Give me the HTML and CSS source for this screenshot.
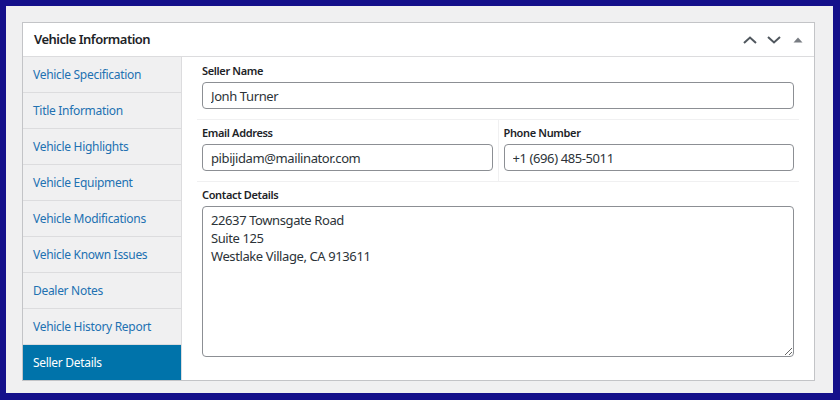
FILE: index.html
```html
<!DOCTYPE html>
<html lang="en">
<head>
<meta charset="utf-8">
<title>Vehicle Information</title>
<link rel="stylesheet" href="styles.css">
</head>
<body>
<div class="frame">
  <div class="postbox">
    <div class="postbox-header">
      <h2 class="postbox-title">Vehicle Information</h2>
      <div class="handle-actions">
        <button class="handle-btn" aria-label="Move up">
          <svg width="14" height="8" viewBox="0 0 14 8"><path d="M1 7 L7 1.5 L13 7" fill="none" stroke="#50575e" stroke-width="2"/></svg>
        </button>
        <button class="handle-btn" aria-label="Move down">
          <svg width="14" height="8" viewBox="0 0 14 8"><path d="M1 1 L7 6.5 L13 1" fill="none" stroke="#50575e" stroke-width="2"/></svg>
        </button>
        <button class="handle-btn toggle" aria-label="Toggle panel">
          <svg width="10" height="6" viewBox="0 0 10 6"><path d="M0.5 5.5 L5 0.5 L9.5 5.5 Z" fill="#787c82"/></svg>
        </button>
      </div>
    </div>
    <div class="postbox-body">
      <ul class="tabs">
        <li><a href="#">Vehicle Specification</a></li>
        <li><a href="#">Title Information</a></li>
        <li><a href="#">Vehicle Highlights</a></li>
        <li><a href="#">Vehicle Equipment</a></li>
        <li><a href="#">Vehicle Modifications</a></li>
        <li><a href="#">Vehicle Known Issues</a></li>
        <li><a href="#">Dealer Notes</a></li>
        <li><a href="#">Vehicle History Report</a></li>
        <li class="active"><a href="#">Seller Details</a></li>
      </ul>
      <div class="panel">
        <div class="row first">
          <div class="field">
            <label class="label" for="seller">Seller Name</label>
            <input class="input" id="seller" type="text" value="Jonh Turner">
          </div>
        </div>
        <div class="row">
          <div class="field half divided">
            <label class="label" for="email">Email Address</label>
            <input class="input" id="email" type="text" value="pibijidam@mailinator.com">
          </div>
          <div class="field half">
            <label class="label" for="phone">Phone Number</label>
            <input class="input" id="phone" type="text" value="+1 (696) 485-5011">
          </div>
        </div>
        <div class="row last">
          <div class="field">
            <label class="label" for="contact">Contact Details</label>
            <textarea class="textarea" id="contact">22637 Townsgate Road
Suite 125
Westlake Village, CA 913611</textarea>
          </div>
        </div>
      </div>
    </div>
  </div>
</div>
</body>
</html>
```
FILE: styles.css
```css
* { box-sizing: border-box; }
html, body { margin: 0; padding: 0; }
body {
  background: #15108b;
  width: 840px;
  height: 400px;
  padding: 6px 7px 7px 6px;
  font-family: "Noto Sans", "DejaVu Sans", sans-serif;
}
.frame {
  background: #f0f0f1;
  height: 100%;
  padding: 16px 18px 0 16px;
}
.postbox {
  background: #fff;
  border: 1px solid #c3c4c7;
  width: 793px;
}
.postbox-header {
  height: 34px;
  border-bottom: 1px solid #dcdcde;
  display: flex;
  align-items: center;
  justify-content: space-between;
  padding: 0 6px 0 11px;
}
.postbox-title {
  margin: 0;
  font-size: 13px;
  font-weight: 600;
  letter-spacing: -0.5px;
  color: #1d2327;
  line-height: 1;
}
.handle-actions {
  display: flex;
  align-items: center;
}
.handle-btn {
  border: 0;
  background: none;
  padding: 0;
  margin: 0;
  width: 24px;
  height: 24px;
  display: flex;
  align-items: center;
  justify-content: center;
}
.handle-btn.toggle { width: 22px; padding-left: 2px; }
.postbox-body {
  display: flex;
}
.tabs {
  list-style: none;
  margin: 0;
  padding: 0;
  width: 159px;
  flex: none;
  background: #f0f0f1;
  border-right: 1px solid #dcdcde;
}
.tabs li {
  height: 36px;
  border-bottom: 1px solid #dcdcde;
}
.tabs li:last-child { border-bottom: 0; height: 35px; }
.tabs a {
  display: flex;
  align-items: center;
  height: 100%;
  padding: 0 10px;
  color: #2271b1;
  font-size: 12px;
  letter-spacing: -0.3px;
  text-decoration: none;
}
.tabs li.active a {
  background: #0073aa;
  color: #fff;
}
.panel {
  flex: 1;
  padding: 0 15px;
}
.row {
  display: flex;
  border-bottom: 1px solid #f0f0f1;
}
.row.last { border-bottom: 0; }
.field {
  flex: 1;
  padding: 5px 5px 10px;
}
.row.first .field { padding-top: 6px; }
.field.half { flex: 1 1 0; }
.field.divided { border-right: 1px solid #f0f0f1; }
.label {
  display: block;
  font-size: 11px;
  font-weight: 600;
  line-height: 15px;
  letter-spacing: -0.35px;
  color: #1d2327;
  margin-bottom: 4px;
}
.input, .textarea {
  display: block;
  width: 100%;
  border: 1px solid #8c8f94;
  border-radius: 4px;
  background: #fff;
  color: #2c3338;
  font-family: "Noto Sans", "DejaVu Sans", sans-serif;
  font-size: 13px;
  letter-spacing: -0.4px;
  margin: 0;
}
.input {
  height: 27px;
  padding: 0 8px;
}
.textarea {
  height: 151px;
  padding: 4px 8px;
  line-height: 18px;
  resize: vertical;
}
```
